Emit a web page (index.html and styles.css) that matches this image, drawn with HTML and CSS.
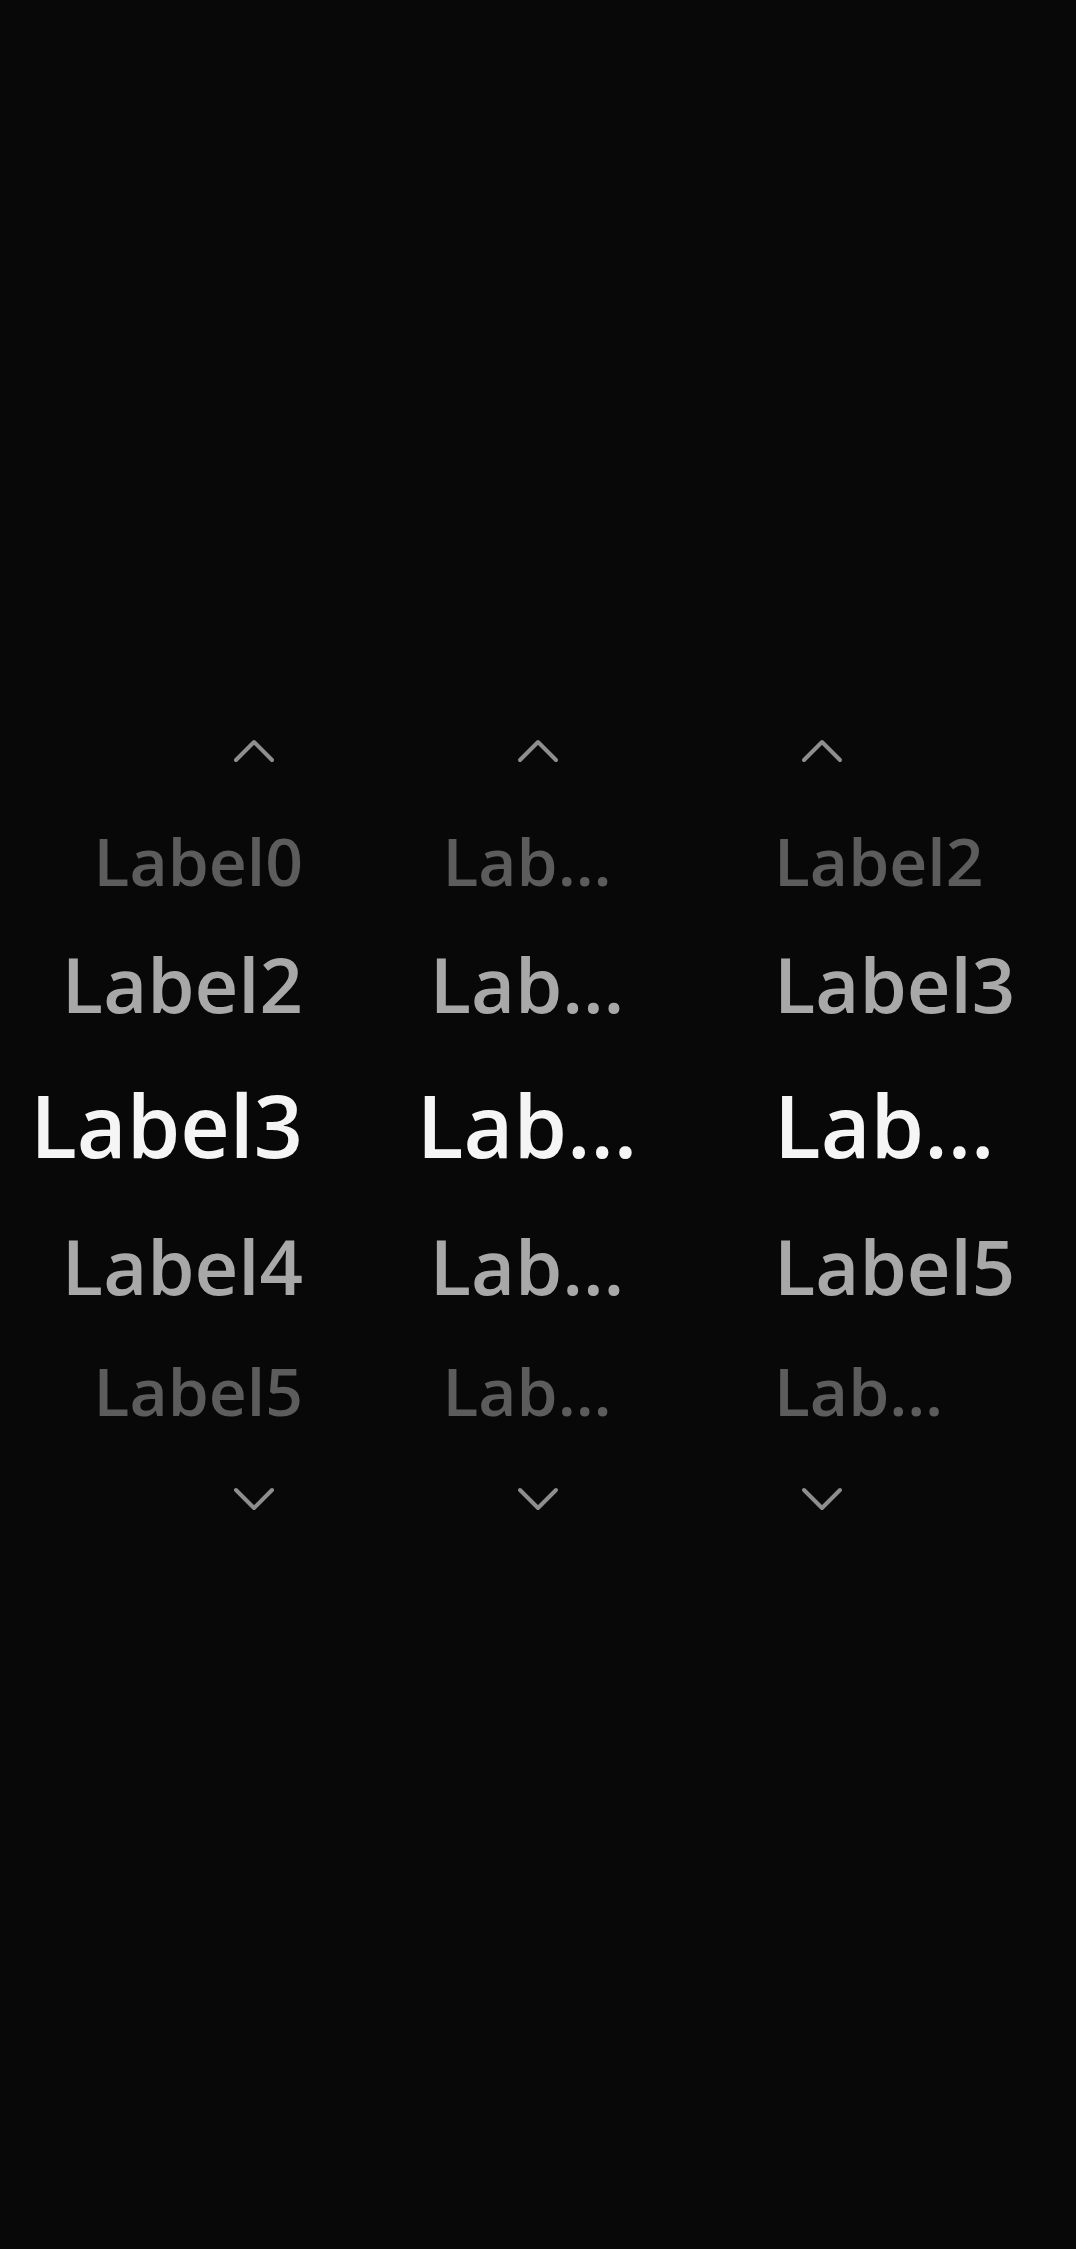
FILE: index.html
```html
<!DOCTYPE html>
<html lang="en">
<head>
<meta charset="utf-8">
<title>Text Picker</title>
<link rel="stylesheet" href="styles.css">
</head>
<body>
<main class="screen">
  <div class="pickers">
    <section class="picker picker-end">
      <svg class="arrow" viewBox="0 0 42 26" width="42" height="26"><path d="M3 23 L21 5 L39 23"/></svg>
      <div class="items">
        <div class="item sm"><span>Label0</span></div>
        <div class="item md"><span>Label2</span></div>
        <div class="item lg"><span>Label3</span></div>
        <div class="item md"><span>Label4</span></div>
        <div class="item sm"><span>Label5</span></div>
      </div>
      <svg class="arrow" viewBox="0 0 42 26" width="42" height="26"><path d="M3 3 L21 21 L39 3"/></svg>
    </section>
    <section class="picker picker-center">
      <svg class="arrow" viewBox="0 0 42 26" width="42" height="26"><path d="M3 23 L21 5 L39 23"/></svg>
      <div class="items">
        <div class="item sm"><span>Lab…</span></div>
        <div class="item md"><span>Lab…</span></div>
        <div class="item lg"><span>Lab…</span></div>
        <div class="item md"><span>Lab…</span></div>
        <div class="item sm"><span>Lab…</span></div>
      </div>
      <svg class="arrow" viewBox="0 0 42 26" width="42" height="26"><path d="M3 3 L21 21 L39 3"/></svg>
    </section>
    <section class="picker picker-start">
      <svg class="arrow" viewBox="0 0 42 26" width="42" height="26"><path d="M3 23 L21 5 L39 23"/></svg>
      <div class="items">
        <div class="item sm"><span>Label2</span></div>
        <div class="item md"><span>Label3</span></div>
        <div class="item lg"><span>Lab…</span></div>
        <div class="item md"><span>Label5</span></div>
        <div class="item sm"><span>Lab…</span></div>
      </div>
      <svg class="arrow" viewBox="0 0 42 26" width="42" height="26"><path d="M3 3 L21 21 L39 3"/></svg>
    </section>
  </div>
</main>
</body>
</html>
```

FILE: styles.css
```css
html, body {
  margin: 0;
  padding: 0;
  background: #080808;
}

body {
  font-family: "Open Sans", "Noto Sans", "DejaVu Sans", sans-serif;
  font-weight: 600;
}

.screen {
  min-height: 2249px;
  display: flex;
  align-items: center;
  justify-content: center;
}

.pickers {
  display: flex;
  flex-direction: row;
}

.picker {
  width: 284px;
  display: flex;
  flex-direction: column;
  align-items: center;
}

.arrow {
  display: block;
  fill: none;
  stroke: #8e8e8e;
  stroke-width: 4;
  stroke-linecap: round;
  stroke-linejoin: round;
}

.items {
  align-self: stretch;
  display: flex;
  flex-direction: column;
  margin: 38px 0;
}

.item {
  display: flex;
  align-items: center;
  white-space: nowrap;
}

.item span {
  flex: none;
}

.sm {
  height: 118px;
  font-size: 66px;
  color: #5c5c5c;
}

.md {
  height: 130px;
  font-size: 76px;
  color: #a8a8a8;
}

.lg {
  height: 152px;
  font-size: 86px;
  color: #f5f5f5;
}

.picker-end .item {
  justify-content: flex-end;
  padding-right: 93px;
}

.picker-center .item {
  justify-content: center;
  padding-right: 22px;
}

.picker-start .item {
  justify-content: flex-start;
  padding-left: 94px;
}
```
